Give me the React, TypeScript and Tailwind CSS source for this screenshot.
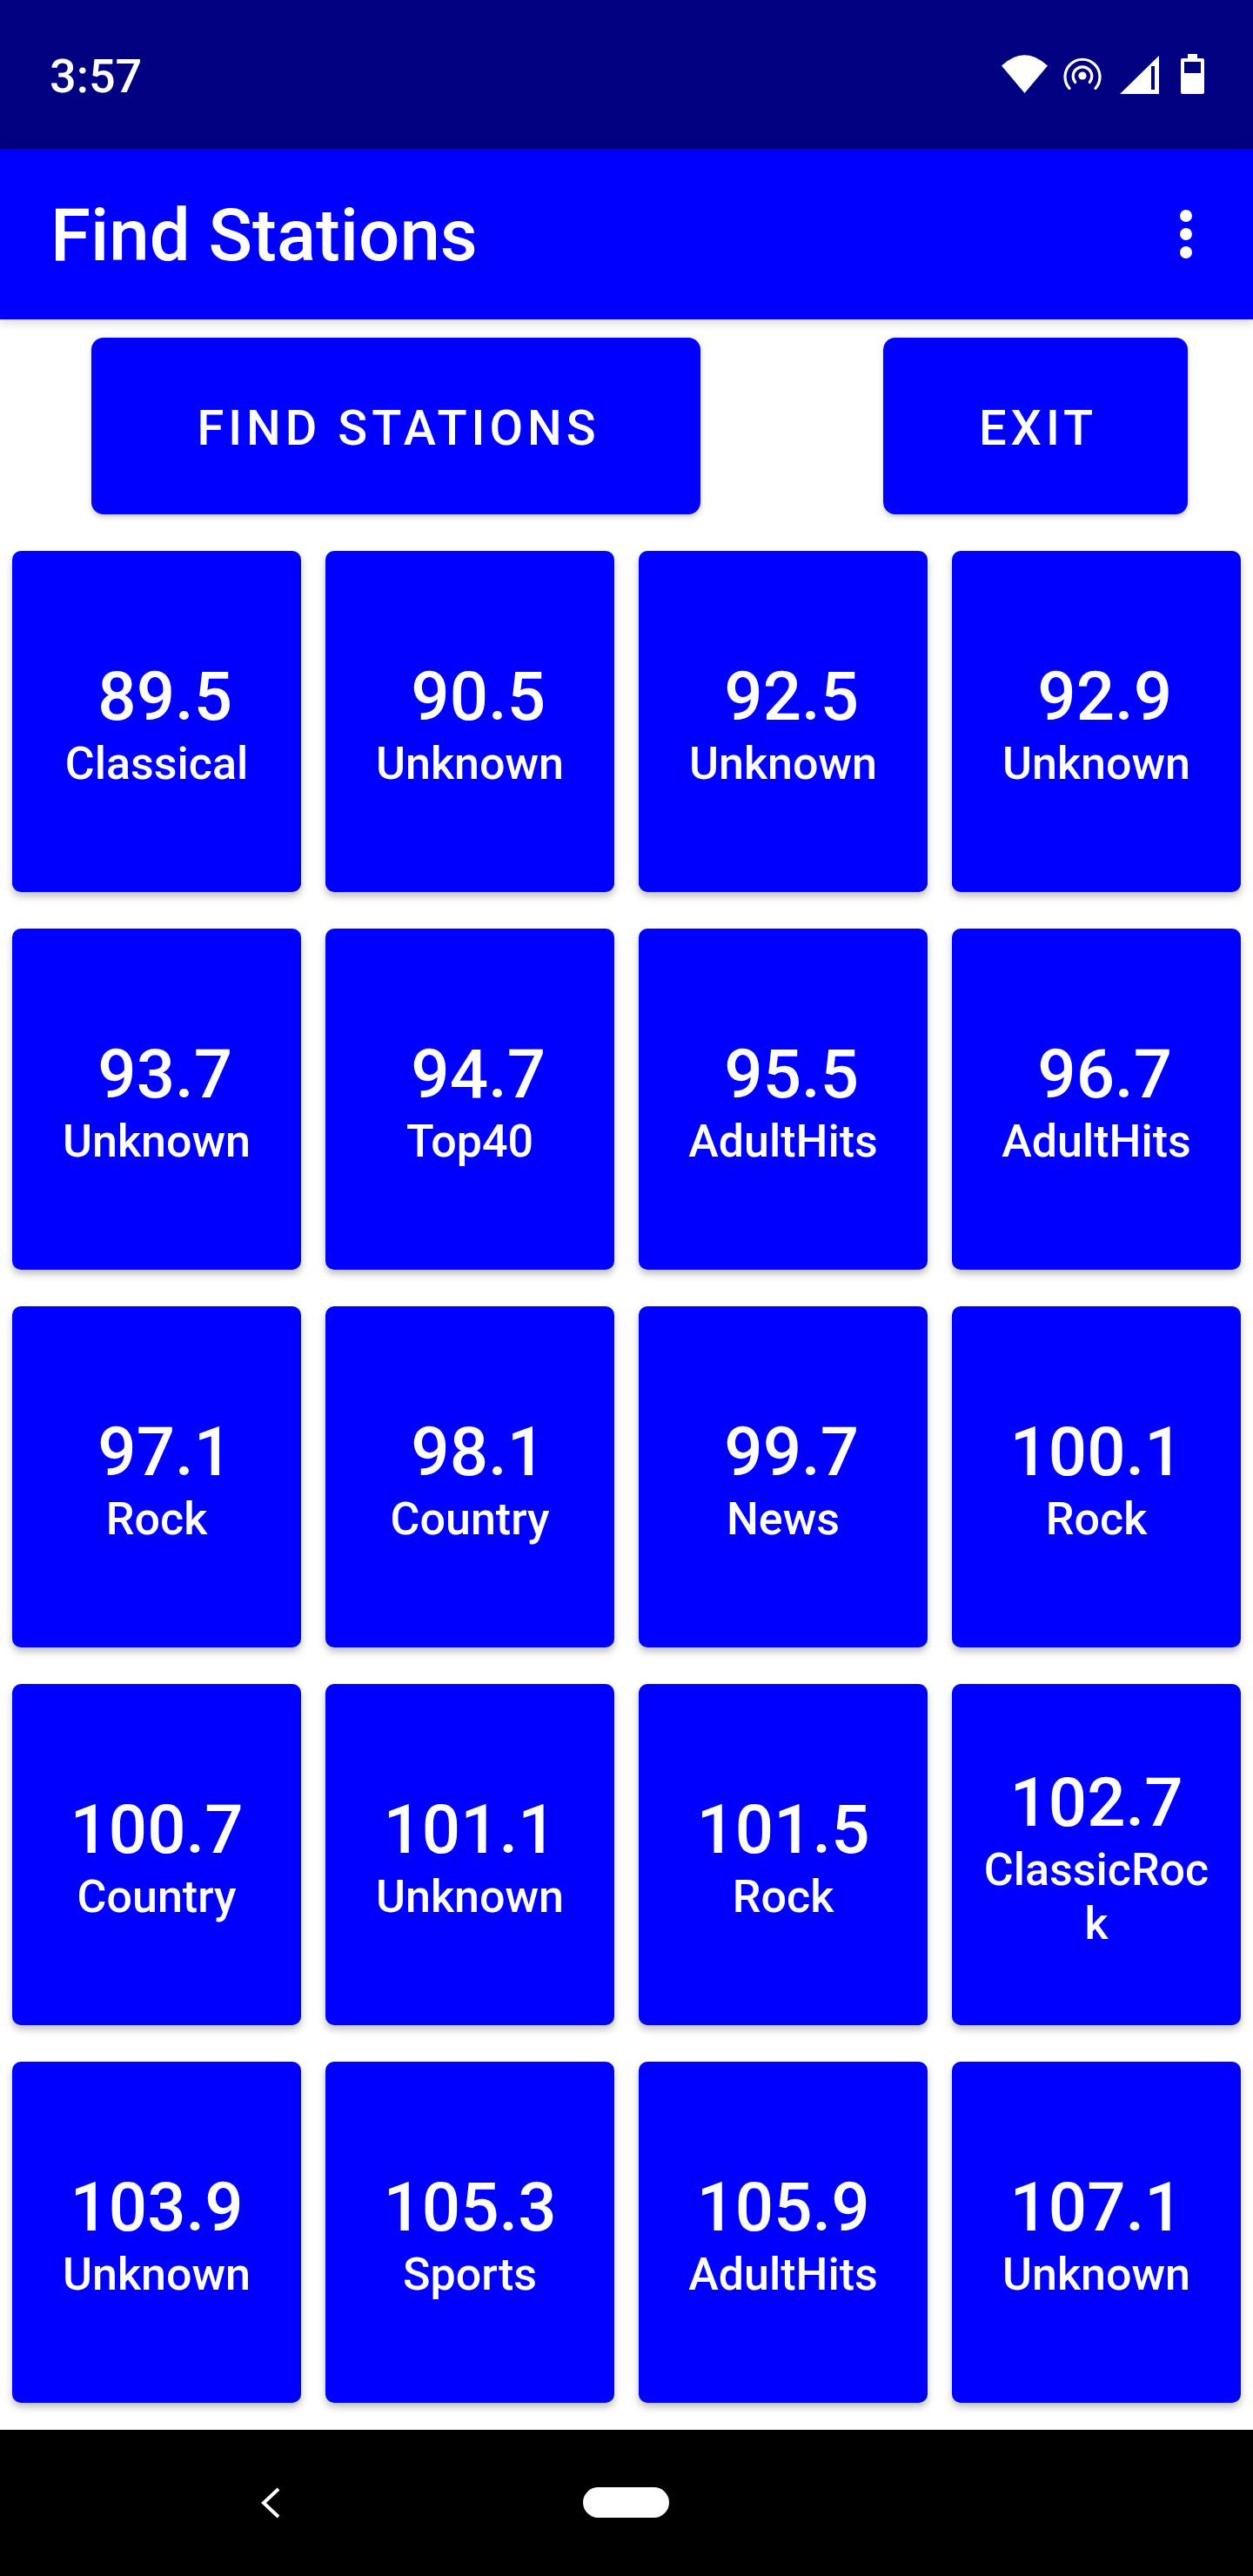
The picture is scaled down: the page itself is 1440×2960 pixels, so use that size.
const stations = [
  { freq: ' 89.5', genre: 'Classical' },
  { freq: ' 90.5', genre: 'Unknown' },
  { freq: ' 92.5', genre: 'Unknown' },
  { freq: ' 92.9', genre: 'Unknown' },
  { freq: ' 93.7', genre: 'Unknown' },
  { freq: ' 94.7', genre: 'Top40' },
  { freq: ' 95.5', genre: 'AdultHits' },
  { freq: ' 96.7', genre: 'AdultHits' },
  { freq: ' 97.1', genre: 'Rock' },
  { freq: ' 98.1', genre: 'Country' },
  { freq: ' 99.7', genre: 'News' },
  { freq: '100.1', genre: 'Rock' },
  { freq: '100.7', genre: 'Country' },
  { freq: '101.1', genre: 'Unknown' },
  { freq: '101.5', genre: 'Rock' },
  { freq: '102.7', genre: 'ClassicRock' },
  { freq: '103.9', genre: 'Unknown' },
  { freq: '105.3', genre: 'Sports' },
  { freq: '105.9', genre: 'AdultHits' },
  { freq: '107.1', genre: 'Unknown' },
];

function StatusBar() {
  return (
    <div className="h-[171px] bg-[#000080] flex items-start pt-[62px] text-white">
      <div className="ml-[57px] mt-[1px] text-[54px] leading-[50px] font-medium">3:57</div>
      <div className="ml-auto mr-[56px] flex items-start">
        <svg className="mt-[1px]" width="53" height="44" viewBox="0 0 53 44" fill="white">
          <path d="M0 12.5Q26.5 -12 53 12.5L26.5 44Z" />
        </svg>
        <svg className="ml-[18px] mt-[3px]" width="44" height="38" viewBox="0 0 44 38" fill="none">
          <path d="M7 36.5A20 20 0 1 1 37 36.5" stroke="white" strokeWidth="3.2" strokeLinecap="round" />
          <path d="M13.7 29.5A10.8 10.8 0 1 1 30.3 29.5" stroke="white" strokeWidth="3.2" strokeLinecap="round" />
          <circle cx="22" cy="22" r="4.6" fill="white" />
        </svg>
        <svg className="ml-[21px] mt-[2px]" width="45" height="44" viewBox="0 0 45 44" fill="white">
          <path fillRule="evenodd" d="M0 44L45 0V44ZM36 12V39H40V12Z" />
        </svg>
        <svg className="ml-[25px]" width="27" height="46" viewBox="0 0 27 46" fill="white">
          <path fillRule="evenodd" d="M8 0H19V5H25Q27 5 27 7V44Q27 46 25 46H2Q0 46 0 44V7Q0 5 2 5H8ZM4 9V22H23V9Z" />
        </svg>
      </div>
    </div>
  );
}

function AppBar() {
  return (
    <div className="relative z-10 h-[196px] bg-[#0000ff] flex items-center text-white shadow-[0_5px_10px_rgba(0,0,0,0.14)]">
      <div className="ml-[58px] pt-[4px] text-[83.5px] leading-[98px] font-medium">Find Stations</div>
      <div className="ml-auto mr-[70px] flex flex-col gap-[7px]">
        <span className="w-[14px] h-[14px] rounded-full bg-white" />
        <span className="w-[14px] h-[14px] rounded-full bg-white" />
        <span className="w-[14px] h-[14px] rounded-full bg-white" />
      </div>
    </div>
  );
}

function ActionButton({ label, className }: { label: string; className: string }) {
  return (
    <button
      className={`h-[203px] rounded-[14px] bg-[#0000ff] text-white text-[56px] font-medium tracking-[0.0892em] pl-[6px] pt-[4px] shadow-[0_3px_6px_rgba(0,0,0,0.22)] ${className}`}
    >
      {label}
    </button>
  );
}

function StationCard({ freq, genre }: { freq: string; genre: string }) {
  return (
    <div className="h-[392px] rounded-[10px] bg-[#0000ff] text-white flex flex-col items-center justify-center text-center px-[28px] pt-[6px] shadow-[0_5px_9px_rgba(0,0,0,0.25)]">
      <div className="whitespace-pre text-[78px] leading-[92px] font-medium">{freq}</div>
      <div className="w-full break-all text-[52px] leading-[62px] font-medium">{genre}</div>
    </div>
  );
}

function NavBar() {
  return (
    <div className="relative z-10 h-[168px] bg-black flex items-start pt-[66px]">
      <svg className="ml-[300px]" width="22" height="36" viewBox="0 0 22 36" fill="none">
        <path d="M20 2L3 18L20 34" stroke="white" strokeWidth="4" strokeLinejoin="miter" />
      </svg>
      <div className="ml-[348px] w-[99px] h-[35px] rounded-full bg-white" />
    </div>
  );
}

export default function App() {
  return (
    <div className="w-[1440px] h-[2960px] flex flex-col bg-white font-['Roboto',sans-serif] overflow-hidden">
      <StatusBar />
      <AppBar />
      <main className="flex-1">
        <div className="flex pt-[21px]">
          <ActionButton label="FIND STATIONS" className="ml-[105px] w-[700px]" />
          <ActionButton label="EXIT" className="ml-[210px] w-[350px]" />
        </div>
        <div className="mt-[42px] px-[14px] grid grid-cols-4 gap-x-[28px] gap-y-[42px]">
          {stations.map((s) => (
            <StationCard key={s.freq} freq={s.freq} genre={s.genre} />
          ))}
        </div>
      </main>
      <NavBar />
    </div>
  );
}
